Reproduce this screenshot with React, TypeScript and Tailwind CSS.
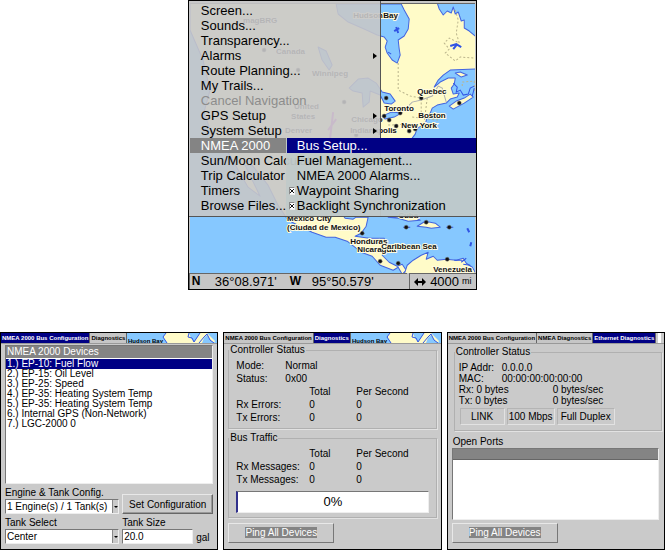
import { useState } from "react";
import type { ReactNode } from "react";

type MenuItem = { label: string; arrow?: boolean; disabled?: boolean };

const mainMenu: MenuItem[] = [
  { label: "Screen..." },
  { label: "Sounds..." },
  { label: "Transparency..." },
  { label: "Alarms", arrow: true },
  { label: "Route Planning..." },
  { label: "My Trails..." },
  { label: "Cancel Navigation", disabled: true },
  { label: "GPS Setup", arrow: true },
  { label: "System Setup", arrow: true },
  { label: "NMEA 2000" },
  { label: "Sun/Moon Calculator" },
  { label: "Trip Calculator" },
  { label: "Timers" },
  { label: "Browse Files..." },
];

const subMenu = ["Bus Setup...", "Fuel Management...", "NMEA 2000 Alarms..."];
const subToggles = ["Waypoint Sharing", "Backlight Synchronization"];

const devices = [
  "1.) EP-10: Fuel Flow",
  "2.) EP-15: Oil Level",
  "3.) EP-25: Speed",
  "4.) EP-35: Heating System Temp",
  "5.) EP-35: Heating System Temp",
  "6.) Internal GPS (Non-Network)",
  "7.) LGC-2000 0",
];

const mapLabels: [number, number, string][] = [
  [243, 23, "magBRG"],
  [276, 54, "Canada"],
  [312, 76, "Winnipeg"],
  [294, 109, "United"],
  [291, 119, "States"],
  [285, 133, "Denver"],
  [351, 122, "Chicago"],
  [350, 133, "Indianapolis"],
  [353, 18, "Hudson"],
  [383, 18, "Bay"],
  [417, 94, "Quebec"],
  [384, 111, "Toronto"],
  [418, 118, "Boston"],
  [401, 128, "New York"],
  [287, 221, "Mexico City"],
  [287, 230, "(Ciudad de Mexico)"],
  [398, 218, "Cuba"],
  [350, 244, "Honduras"],
  [357, 252, "Nicaragua"],
  [381, 249, "Caribbean Sea"],
  [433, 272, "Venezuela"],
];

const cities: [number, number][] = [
  [386, 98], [421, 98], [459, 103], [400, 113], [384, 116], [389, 120],
  [396, 126], [409, 131], [415, 129], [264, 50], [298, 70], [344, 102],
  [356, 135], [362, 233], [380, 261], [398, 263], [406, 227], [426, 222],
  [449, 227], [447, 259],
];

function Chart() {
  return (
    <svg viewBox="190 4 285 269" className="block w-full" aria-label="Chart">
      <rect x="190" y="4" width="285" height="269" fill="#86c8ff" />
      <g fill="#fffbc8" stroke="#4264e0" strokeWidth="1" strokeLinejoin="round">
        <path d="M190 0H436L439 9L443 15L447 11L451 13L453 7L455 14L458 12L461 21L464 20L464 28L469 31L476 37V69L450 70L443 75L438 80L434 87L440 82L448 78L455 78L454 84L451 88L453 94L459 93L457 97L450 99L446 103L437 105L432 108L430 113L427 117L425 124L417 128L415 134L412 138L408 150L392 164L388 184L382 180L376 165L350 165L338 180L335 205L345 218L353 219L356 217H368L366 226L361 233L355 236L369 238L384 238L386 247L382 255L389 262L397 266L402 264L406 270L402 274L398 267L393 270L380 265L372 256L361 252L347 241L335 237L326 237L312 232L300 226L288 220L278 205L268 185L252 165L245 165L260 196L248 187L228 152L213 138L204 112L210 90L203 60L190 30Z" />
        <path d="M449 106L456 101L464 98L470 94L473 97L464 103L453 109Z" />
        <path d="M455 73L460 72L467 75L461 77Z" />
        <path d="M404 274L407 265L413 260L421 255L428 252L426 259L433 256L437 260L446 259L456 260L463 258L466 263L472 267L476 274Z" />
        <path d="M388 217L398 218L408 221L420 220L413 216Z" />
        <path d="M417 226L425 221L435 223L440 227L431 228L426 227Z" />
      </g>
      <g fill="#86c8ff" stroke="#4264e0" strokeWidth="1" strokeLinejoin="round">
        <path d="M336 4H401L404 10L409 19L408 29L404 36L398 40L399 49L400 55L397 63L392 60L387 53L385 47L387 41L384 37L377 35L364 29L348 22L338 14Z" />
        <path d="M349 88L358 79L368 78L376 83L382 92L390 94L395 101L391 104L384 103L380 95L370 91L369 102L363 107L362 93L353 91Z" />
        <path d="M382 116L391 112L401 113L394 117L385 119Z" />
        <path d="M318 47L326 51L332 65L329 70L322 60Z" />
      </g>
      <g fill="none" stroke="#bab48c" strokeDasharray="2 2">
        <path d="M398 63V90L410 96L421 98L421 116M455 10L458 20L456 33L459 43L449 38L444 43L449 49L445 53L455 61L460 57L475 58M412 117L438 120M427 98L424 122M388 125L412 124M462 86V82L474 81V92" />
      </g>
      <g fill="none" stroke="#3154e4">
        <path d="M394 31L399 28M396 27L398 33M450 46L456 44L461 47M453 49L457 44M467 228L469 232M471 242L470 246" strokeWidth="2" />
        <path d="M453 83L457 87L456 92L460 90L463 95L468 94L470 88L474 86M474 88L472 96M388 52L391 54" />
        <path d="M403 227H410M446 227H453M454 260H462M461 262L466 258M463 264L470 265" />
      </g>
      <path d="M333 112L330 138M336 119L328 130" stroke="#d44bdc" strokeWidth="2" fill="none" />
      <path d="M401 113L412 102L421 100L432 96L438 86L442 88L446 102" stroke="#aeb0b4" fill="none" />
      {cities.map(([x, y]) => (
        <circle key={`${x}-${y}`} cx={x} cy={y} r="2" fill="#111" stroke="#777" strokeWidth="0.5" />
      ))}
      <g
        className="font-['Liberation_Sans',Arial,sans-serif] text-[8px] font-bold"
        fill="#111"
        stroke="#fffbe0"
        strokeWidth="2"
        paintOrder="stroke"
      >
        {mapLabels.map(([x, y, text]) => (
          <text key={text} x={x} y={y}>{text}</text>
        ))}
      </g>
    </svg>
  );
}

function SettingsMenu() {
  return (
    <div className="absolute top-0 left-0 w-[192px] border-r border-b border-[#555] bg-[#c6c6c8]/90 pt-[2px] pb-[3px] pl-px">
      {mainMenu.map((item) => (
        <button
          key={item.label}
          disabled={item.disabled}
          className={
            "flex h-[15px] w-full items-center justify-between pr-[3px] pl-[11px] text-left text-[13px] leading-[15px] whitespace-nowrap " +
            (item.label === "NMEA 2000" ? "bg-[#848484] text-white" : item.disabled ? "text-[#8c8c8c]" : "text-black")
          }
        >
          <span>{item.label}</span>
          {item.arrow && (
            <svg viewBox="0 0 4 6" className="h-[6px] w-[4px]"><path d="M0 0L4 3L0 6Z" /></svg>
          )}
        </button>
      ))}
    </div>
  );
}

function BusMenu() {
  return (
    <div className="absolute top-[137px] right-0 left-[97px] border-b border-[#555] bg-[#c0c9c9]/95 pb-[3px] pl-px">
      {subMenu.map((label, i) => (
        <button
          key={label}
          className={
            "block h-[15px] w-full pl-[10px] text-left text-[13px] leading-[15px] whitespace-nowrap " +
            (i === 0 ? "bg-[#000084] text-white" : "text-black")
          }
        >
          {label}
        </button>
      ))}
      {subToggles.map((label) => (
        <label key={label} className="flex h-[15px] items-center gap-[2px] pl-[2px] text-[13px] leading-[15px] whitespace-nowrap">
          <span className="relative h-[8px] w-[6px]">
            <input type="checkbox" defaultChecked className="peer block h-full w-full appearance-none border border-[#888] border-r-[#eee] border-b-[#eee] bg-white" />
            <svg viewBox="0 0 6 8" className="pointer-events-none absolute inset-0 hidden h-full w-full peer-checked:block">
              <path d="M1 2L5 6M5 2L1 6" stroke="#111" fill="none" />
            </svg>
          </span>
          {label}
        </label>
      ))}
    </div>
  );
}

function ChartScreen() {
  return (
    <section className="relative mx-auto w-[43.5%] min-w-[289px] border border-black bg-[#c6c6c6]">
      <div className="border-t-2 border-r border-l border-[#c6c6c6]">
        <div className="border-t border-[#666]">
          <Chart />
        </div>
      </div>
      <SettingsMenu />
      <BusMenu />
      <footer className="flex gap-[2px] text-[13px] leading-[15px] whitespace-nowrap">
        <div className="flex flex-1 border-t border-l border-[#666] pl-[2px]">
          <b className="w-[23px] text-[12px]">N</b>
          <span className="w-[75px]">36°08.971'</span>
          <b className="w-[22px] text-[12px]">W</b>
          <span>95°50.579'</span>
        </div>
        <div className="flex w-[67px] items-center border-t border-l border-[#666] pl-[4px]">
          <svg viewBox="0 0 12 8" className="mr-[4px] h-[8px] w-[12px]">
            <path d="M0 4L4 0V3H8V0L12 4L8 8V5H4V8Z" />
          </svg>
          <span>4000</span>
          <span className="ml-[3px] text-[9px]">mi</span>
        </div>
      </footer>
    </section>
  );
}

function TabBar({ tabs, active, children }: { tabs: string[]; active: string; children?: ReactNode }) {
  const [current, setCurrent] = useState(active);
  return (
    <div role="tablist" className="flex h-[11px] border-b border-[#999]">
      {tabs.map((tab) => (
        <button
          key={tab}
          role="tab"
          aria-selected={tab === current}
          onClick={() => setCurrent(tab)}
          className={
            "shrink-0 border-r border-[#666] px-px text-[6px] leading-[10px] font-bold whitespace-nowrap " +
            (tab === current ? "bg-[#000084] text-white" : "bg-[#c6c6c6] text-black")
          }
        >
          {tab}
        </button>
      ))}
      {children}
    </div>
  );
}

function MapStrip() {
  return (
    <svg viewBox="0 0 92 10" preserveAspectRatio="xMinYMin slice" className="h-[10px] min-w-0 flex-1">
      <rect width="92" height="10" fill="#86c8ff" />
      <path d="M39 0L36 4L40 10H75L77 5L80 2L83 7L87 10L88 8L80 0Z" fill="#fffbc8" />
      <path d="M62 0L64 5L67 9L71 3L73 0Z" fill="#86c8ff" />
      <path d="M39 0L36 4L40 10M62 0L61 4L65 5L67 9L71 3L73 0M72 10L77 4L80 1L83 7L87 10" fill="none" stroke="#3154e4" />
      <text x="1" y="10" className="text-[6px] font-bold">Hudson Bay</text>
    </svg>
  );
}

function Panel({ children }: { children: ReactNode }) {
  return <section className="flex min-w-0 flex-col border border-black bg-[#cacaca] text-[10px] text-black">{children}</section>;
}

function Group({ title, children }: { title: string; children: ReactNode }) {
  return (
    <fieldset className="min-w-0 border border-[#b0b0b0] shadow-[1px_1px_0_#e2e2e2]">
      <legend className="px-px leading-[10px]">{title}</legend>
      {children}
    </fieldset>
  );
}

function Select({ id, options }: { id: string; options: string[] }) {
  return (
    <div className="relative">
      <select id={id} className="block h-[15px] w-full appearance-none border border-[#777] border-r-[#eee] border-b-[#eee] bg-white pl-px text-[10px] leading-[13px]">
        {options.map((o) => <option key={o}>{o}</option>)}
      </select>
      <span className="pointer-events-none absolute top-px right-px bottom-px flex w-[6px] items-center justify-center border-l border-[#888] bg-[#cacaca]">
        <svg viewBox="0 0 4 2" className="h-[2px] w-[4px]"><path d="M0 0H4L2 2Z" /></svg>
      </span>
    </div>
  );
}

function Counters({ rows }: { rows: string[] }) {
  return (
    <table className="w-full table-fixed text-left leading-[13px]">
      <thead>
        <tr>
          <th className="w-[73px]"></th>
          <th className="w-[47px] font-normal">Total</th>
          <th className="font-normal">Per Second</th>
        </tr>
      </thead>
      <tbody>
        {rows.map((row) => (
          <tr key={row}>
            <th className="font-normal whitespace-nowrap">{row}</th>
            <td>0</td>
            <td>0</td>
          </tr>
        ))}
      </tbody>
    </table>
  );
}

function PingButton() {
  return (
    <button className="h-[20px] w-[106px] border border-[#e8e8e8] border-r-[#777] border-b-[#777] leading-[12px] text-white">
      <span className="bg-[#848484]">Ping All Devices</span>
    </button>
  );
}

function ConfigPanel() {
  const [selected, setSelected] = useState(0);
  return (
    <Panel>
      <TabBar tabs={["NMEA 2000 Bus Configuration", "Diagnostics"]} active="NMEA 2000 Bus Configuration">
        <MapStrip />
      </TabBar>
      <div className="flex flex-1 flex-col px-[4px] pt-px pb-[5px]">
        <div className="h-[139px] border border-[#777] border-r-[#eee] border-b-[#eee] bg-white">
          <h2 className="mb-px h-[12px] bg-[#848484] pl-px leading-[12px] text-white">NMEA 2000 Devices</h2>
          <ul className="flex flex-col">
            {devices.map((device, i) => (
              <li key={device}>
                <button
                  onClick={() => setSelected(i)}
                  className={"block w-full pl-px text-left leading-[10px] " + (i === selected ? "bg-[#000084] text-white" : "")}
                >
                  {device}
                </button>
              </li>
            ))}
          </ul>
        </div>
        <div className="mt-[3px] grid grid-cols-[114fr_91fr] items-end gap-x-[3px]">
          <div>
            <label htmlFor="engine" className="block leading-[12px]">Engine &amp; Tank Config.</label>
            <Select id="engine" options={["1 Engine(s) / 1 Tank(s)"]} />
          </div>
          <button className="h-[20px] border border-[#e8e8e8] border-r-[#666] border-b-[#666] whitespace-nowrap shadow-[inset_-1px_-1px_0_#999]">
            Set Configuration
          </button>
          <div className="mt-[3px]">
            <label htmlFor="tank" className="block leading-[12px]">Tank Select</label>
            <Select id="tank" options={["Center"]} />
          </div>
          <div>
            <label htmlFor="size" className="block leading-[12px]">Tank Size</label>
            <div className="flex items-end gap-[3px]">
              <input
                id="size"
                defaultValue="20.0"
                className="h-[15px] w-[71px] border border-[#777] border-r-[#eee] border-b-[#eee] bg-white pl-px"
              />
              <span className="leading-[12px]">gal</span>
            </div>
          </div>
        </div>
      </div>
    </Panel>
  );
}

function DiagnosticsPanel() {
  return (
    <Panel>
      <TabBar tabs={["NMEA 2000 Bus Configuration", "Diagnostics"]} active="Diagnostics">
        <MapStrip />
      </TabBar>
      <div className="flex flex-1 flex-col px-[4px] pt-px">
        <Group title="Controller Status">
          <div className="px-[7px] pt-[4px] pb-[4px]">
            <dl className="grid grid-cols-[49px_1fr] leading-[13px]">
              <dt>Mode:</dt>
              <dd>Normal</dd>
              <dt>Status:</dt>
              <dd>0x00</dd>
            </dl>
            <Counters rows={["Rx Errors:", "Tx Errors:"]} />
          </div>
        </Group>
        <div className="mt-[4px]">
          <Group title="Bus Traffic">
            <div className="px-[7px] pt-[4px] pb-[4px]">
              <Counters rows={["Rx Messages:", "Tx Messages:"]} />
              <div
                role="progressbar"
                aria-valuenow={0}
                className="mt-[5px] h-[22px] border border-[#777] border-r-[#eee] border-b-[#eee] border-l-2 border-l-[#30308c] bg-white text-center text-[13px] leading-[20px]"
              >
                0%
              </div>
            </div>
          </Group>
        </div>
        <div className="mt-[5px]">
          <PingButton />
        </div>
      </div>
    </Panel>
  );
}

function EthernetPanel() {
  return (
    <Panel>
      <TabBar tabs={["NMEA 2000 Bus Configuration", "NMEA Diagnostics", "Ethernet Diagnostics"]} active="Ethernet Diagnostics">
        <span className="ml-[2px] w-[3px] bg-white" />
      </TabBar>
      <div className="flex flex-1 flex-col pt-[3px] pr-[2px] pl-[4px]">
        <div className="pl-[2px]">
          <Group title="Controller Status">
            <div className="pt-[5px] pb-[5px] pl-[4px]">
              <dl className="grid grid-cols-[43px_1fr] leading-[11px]">
                <dt>IP Addr:</dt>
                <dd>0.0.0.0</dd>
                <dt>MAC:</dt>
                <dd>00:00:00:00:00:00</dd>
              </dl>
              <div className="grid grid-cols-[94px_1fr] leading-[11px]">
                <span>Rx: 0 bytes</span>
                <span>0 bytes/sec</span>
                <span>Tx: 0 bytes</span>
                <span>0 bytes/sec</span>
              </div>
              <div className="mt-[2px] flex gap-[2px] pl-px text-center leading-[15px] whitespace-nowrap">
                <span className="w-[45px] border border-[#b4b4b4] border-r-[#e2e2e2] border-b-[#e2e2e2]">LINK</span>
                <span className="w-[48px] border border-[#b4b4b4] border-r-[#e2e2e2] border-b-[#e2e2e2]">100 Mbps</span>
                <span className="w-[58px] border border-[#b4b4b4] border-r-[#e2e2e2] border-b-[#e2e2e2]">Full Duplex</span>
              </div>
            </div>
          </Group>
        </div>
        <h2 className="mt-[5px] pl-px leading-[12px]">Open Ports</h2>
        <div className="mr-[3px] h-[72px] border border-[#777] border-r-[#eee] border-b-[#eee] bg-white">
          <div className="h-[11px] border-b border-[#666] bg-[#848484]" />
        </div>
        <div className="mt-[3px]">
          <PingButton />
        </div>
      </div>
    </Panel>
  );
}

export default function App() {
  return (
    <main className="bg-white font-['Liberation_Sans',Arial,sans-serif] text-black">
      <ChartScreen />
      <div className="mt-[42px] grid grid-cols-3 gap-[5px]">
        <ConfigPanel />
        <DiagnosticsPanel />
        <EthernetPanel />
      </div>
    </main>
  );
}
